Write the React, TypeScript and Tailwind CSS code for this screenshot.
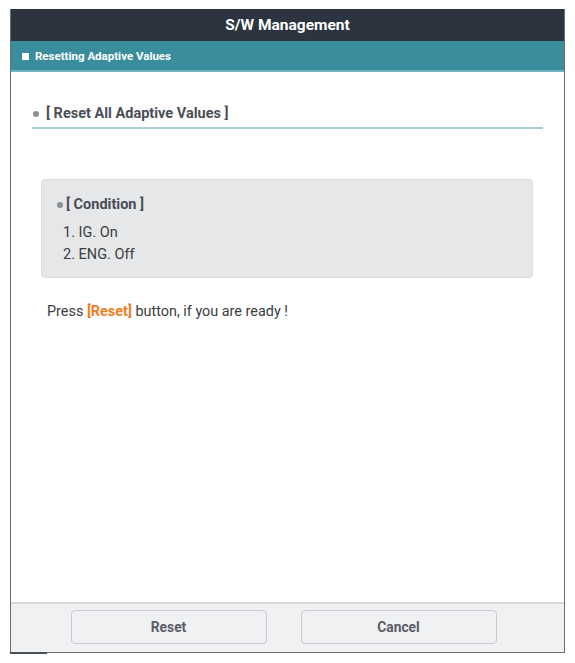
import React from "react";

export default function App() {
  return (
    <div
      className="w-[575px] h-[663px] bg-white pt-[9px] pl-[10px]"
      style={{ fontFamily: "Roboto, 'Liberation Sans', sans-serif" }}
    >
      <div className="relative w-[555px] h-[644px] flex flex-col border-x border-b border-[#6b6e73] bg-white">
        <div className="h-[32px] bg-[#2c343f] flex items-center justify-center pt-[2px] text-white text-[15.5px] font-bold">
          S/W Management
        </div>
        <div className="h-[31px] bg-[#3a8d9d] border-b-2 border-[#6fb3bf] flex items-center pl-[11px] pt-[2px] gap-[6px]">
          <span className="w-[7px] h-[7px] bg-white inline-block" />
          <span className="text-white text-[11.5px] font-bold">Resetting Adaptive Values</span>
        </div>
        <div className="flex-1 flex flex-col px-[21px]">
          <div className="mt-[31px] border-b-2 border-[#a9d2d6] flex items-center pb-[2px]">
            <span className="w-[6px] h-[6px] rounded-full bg-[#8a8d92] ml-[1px] mr-[7px]" />
            <span className="text-[14.5px] font-bold text-[#4a4f57]">[ Reset All Adaptive Values ]</span>
          </div>
          <div className="mt-[50px] ml-[9px] mr-[10px] h-[99px] rounded-[4px] bg-[#e6e7e9] border border-[#dcdde0] pl-[15px] pt-[14px]">
            <div className="flex items-center">
              <span className="w-[6px] h-[6px] rounded-full bg-[#8a8d92] mr-[3px]" />
              <span className="text-[14.5px] font-bold text-[#4a4f57]">[ Condition ]</span>
            </div>
            <div className="mt-[6px] pl-[6px] text-[14.5px] text-[#3a3d42] leading-[22px]">
              <div>1. IG. On</div>
              <div>2. ENG. Off</div>
            </div>
          </div>
          <div className="mt-[23px] pl-[15px] text-[14.4px] text-[#3a3d42]">
            Press <span className="font-bold text-[#ef7d24]">[Reset]</span> button, if you are ready !
          </div>
        </div>
        <div className="h-[50px] bg-[#f0f1f2] border-t-2 border-[#d7d9dc] flex items-center justify-center gap-[34px] pb-[2px] pr-[8px]">
          <button className="w-[196px] h-[34px] rounded-[4px] border border-[#c9cbcf] bg-[#f0f1f2] text-[13.8px] font-bold text-[#5a5e65]">
            Reset
          </button>
          <button className="w-[196px] h-[34px] rounded-[4px] border border-[#c9cbcf] bg-[#f0f1f2] text-[13.8px] font-bold text-[#5a5e65]">
            Cancel
          </button>
        </div>
        <span className="absolute left-[-1px] bottom-[-2px] w-[37px] h-[2px] bg-[#4a4e55]" />
      </div>
    </div>
  );
}
